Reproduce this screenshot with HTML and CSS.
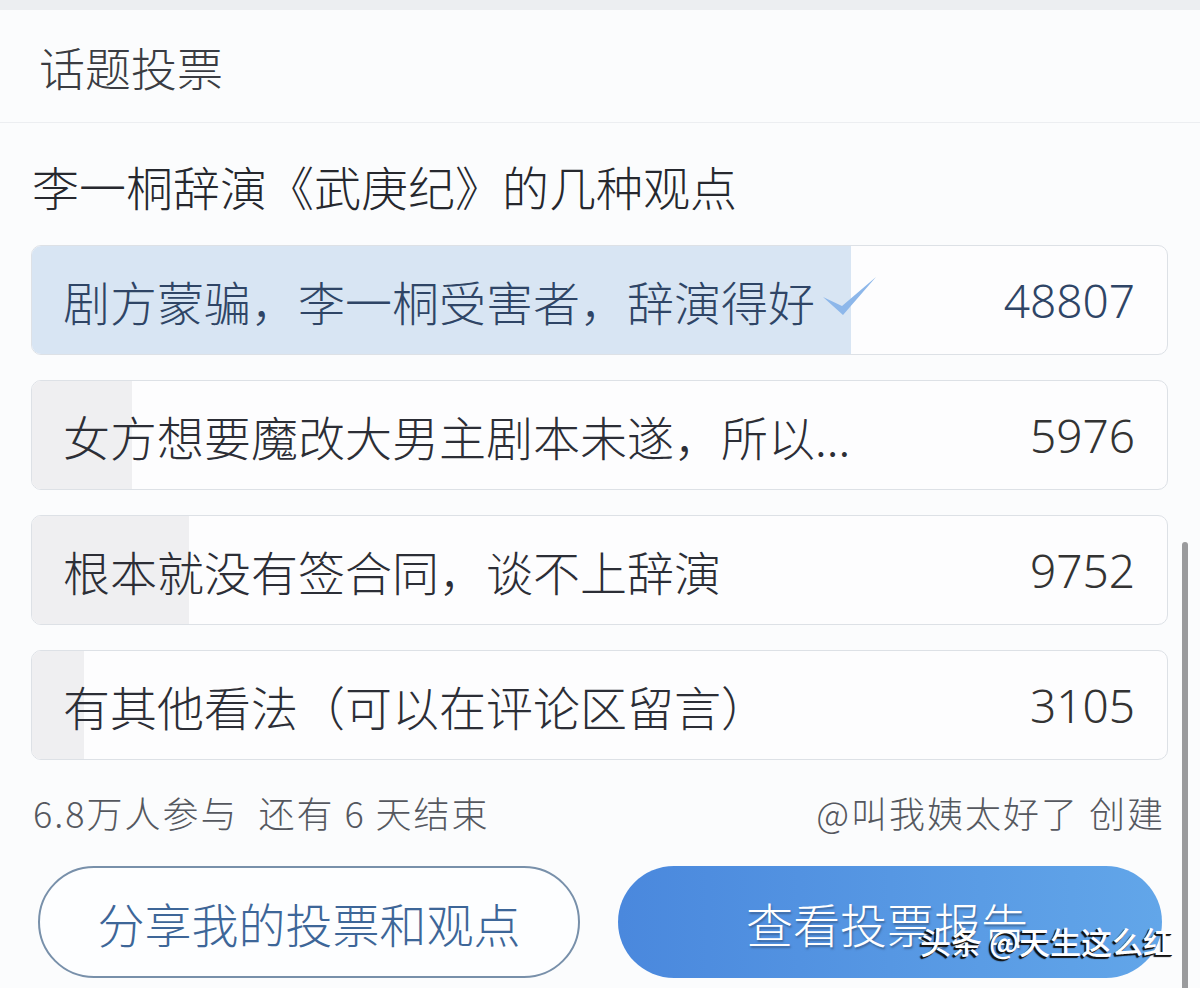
FILE: index.html
```html
<!DOCTYPE html>
<html lang="zh-CN">
<head>
    <meta charset="UTF-8">
    <meta name="viewport" content="width=device-width, initial-scale=1.0">
    <title>话题投票</title>
    <link rel="stylesheet" href="styles.css">
</head>
<body>
    <div class="topbar"></div>

    <!-- Vote card header -->
    <div class="vote-head">话题投票</div>

    <div class="vote">
        <h2 class="vote-title">李一桐辞演《武庚纪》的几种观点</h2>

        <ul class="vote-options">
            <li class="vote-option voted">
                <div class="vote-fill" style="width: 72.2%"></div>
                <span class="vote-text">剧方蒙骗，李一桐受害者，辞演得好<svg class="vote-check" width="56" height="42" viewBox="0 0 56 42"><polygon points="2,22 22,40 55,2 21,31" fill="#8db7ea"/></svg></span>
                <span class="vote-count">48807</span>
            </li>
            <li class="vote-option">
                <div class="vote-fill" style="width: 8.8%"></div>
                <span class="vote-text">女方想要魔改大男主剧本未遂，所以...</span>
                <span class="vote-count">5976</span>
            </li>
            <li class="vote-option">
                <div class="vote-fill" style="width: 13.8%"></div>
                <span class="vote-text">根本就没有签合同，谈不上辞演</span>
                <span class="vote-count">9752</span>
            </li>
            <li class="vote-option">
                <div class="vote-fill" style="width: 4.6%"></div>
                <span class="vote-text">有其他看法（可以在评论区留言）</span>
                <span class="vote-count">3105</span>
            </li>
        </ul>

        <div class="vote-meta">
            <span>6.8万人参与&nbsp;&nbsp;还有 6 天结束</span>
            <span>@叫我姨太好了&nbsp;创建</span>
        </div>

        <div class="vote-actions">
            <a href="#" class="btn btn-outline">分享我的投票和观点</a>
            <a href="#" class="btn btn-primary">查看投票报告</a>
        </div>
    </div>

    <div class="scrollbar"></div>
    <div class="watermark">头条 @天生这么红</div>
</body>
</html>
```

FILE: styles.css
```css
body {
    margin: 0;
    padding: 0;
    height: 988px;
    overflow: hidden;
    position: relative;
    background-color: #fbfcfd;
    font-family: "Noto Sans CJK SC", "Noto Sans", sans-serif;
    font-weight: 300;
    color: #2c2f36;
}

.topbar {
    height: 10px;
    background-color: #eceef1;
}

.vote-head {
    height: 112px;
    display: flex;
    align-items: center;
    padding-left: 39px;
    font-size: 46px;
    color: #3a3c42;
    border-bottom: 1px solid #eceef1;
}

.vote {
    padding: 0 32px 0 31px;
}

.vote-title {
    margin: 0;
    padding: 33px 0 0 1px;
    line-height: 60px;
    font-size: 47px;
    font-weight: 300;
    color: #26282e;
}

.vote-options {
    list-style: none;
    margin: 29px 0 0;
    padding: 0;
    display: flex;
    flex-direction: column;
    gap: 25px;
}

.vote-option {
    position: relative;
    height: 108px;
    border: 1px solid #dde1e6;
    border-radius: 10px;
    overflow: hidden;
    background-color: #fdfdfe;
    display: flex;
    align-items: center;
    justify-content: space-between;
    padding: 0 32px 0 31px;
}

.vote-fill {
    position: absolute;
    top: 0;
    left: 0;
    bottom: 0;
    background-color: #efeff1;
}

.vote-option.voted .vote-fill {
    background-color: #d8e5f3;
}

.vote-text,
.vote-count {
    position: relative;
    font-size: 47px;
    color: #2c2e36;
}

.vote-text {
    display: flex;
    align-items: center;
}

.vote-count {
    font-family: "Noto Sans", sans-serif;
    font-size: 46px;
    color: #333;
}

.voted .vote-text,
.voted .vote-count {
    color: #2f4566;
}

.vote-check {
    margin-left: 6px;
    margin-top: -8px;
}

.vote-meta {
    display: flex;
    justify-content: space-between;
    margin-top: 27px;
    padding: 0 3px 0 2px;
    line-height: 50px;
    font-size: 36px;
    letter-spacing: 2px;
    color: #55585f;
}

.vote-actions {
    display: flex;
    justify-content: space-between;
    margin-top: 29px;
    padding: 0 6px 0 7px;
}

.btn {
    width: 542px;
    height: 112px;
    box-sizing: border-box;
    border-radius: 56px;
    display: flex;
    align-items: center;
    justify-content: center;
    font-size: 47px;
    text-decoration: none;
}

.btn-outline {
    border: 2px solid #7890aa;
    color: #3d6698;
    background-color: #fdfeff;
}

.btn-primary {
    width: 544px;
    color: #fff;
    background: linear-gradient(90deg, #4a88dd, #62a6e9);
    text-shadow: 1px 2px 2px rgba(40, 60, 90, 0.5);
    padding-right: 6px;
}

.scrollbar {
    position: absolute;
    left: 1182px;
    top: 542px;
    width: 6px;
    height: 460px;
    border-radius: 3px;
    background-color: #9a9b9d;
}

.watermark {
    position: absolute;
    left: 920px;
    top: 918px;
    font-size: 31px;
    font-weight: 500;
    color: #fff;
    text-shadow: -1px 1px 0 #111, -2px 2px 1px #111;
}
```
